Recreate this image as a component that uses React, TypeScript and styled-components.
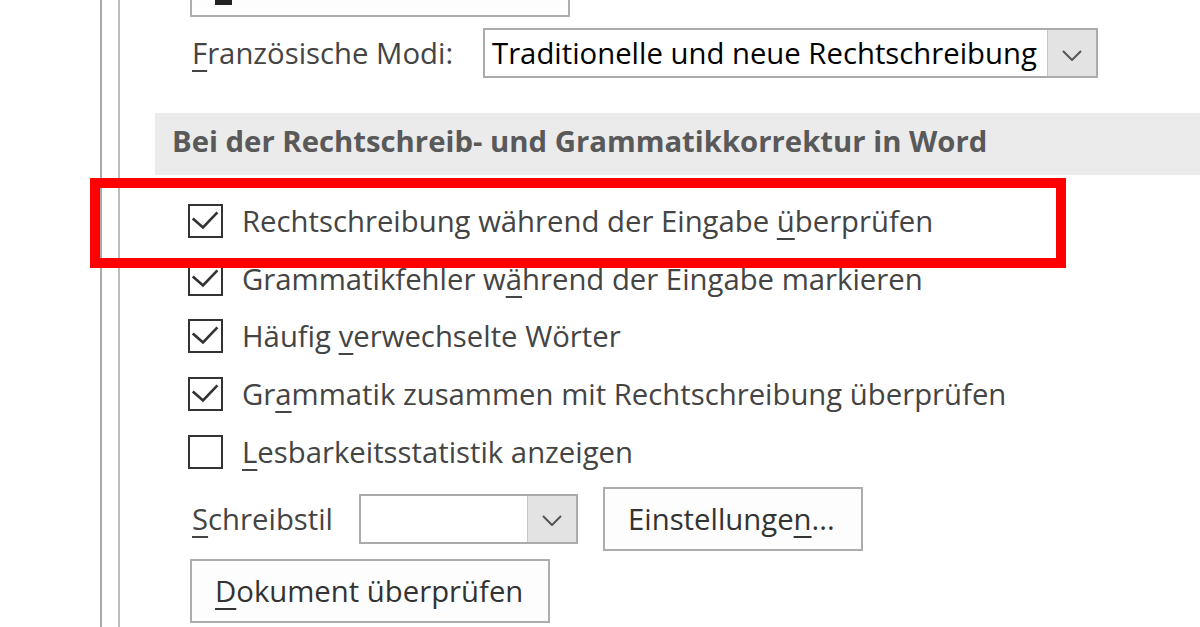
import React from "react";
import styled, { createGlobalStyle } from "styled-components";

const GlobalStyle = createGlobalStyle`
  html, body { margin: 0; padding: 0; background: #fff; }
  body {
    font-family: "Open Sans", "Noto Sans", sans-serif;
    font-size: 29.3px;
    color: #444;
  }
`;

const Page = styled.div`
  position: relative;
  width: 1200px;
  height: 627px;
  overflow: hidden;
  display: flex;
  background: #fff;
`;

const Gutter = styled.div`
  flex: none;
  width: 100px;
`;

const Rail = styled.div`
  flex: none;
  width: 16px;
  border-left: 2px solid #a9a9a9;
  border-right: 2px solid #bdbdbd;
`;

const Content = styled.div`
  flex: 1;
  min-width: 0;
  display: flex;
  flex-direction: column;
  padding-left: 35px;
`;

const Block = styled.div`
  display: flex;
  flex-direction: column;
  align-items: flex-start;
  padding-left: 35px;
`;

const Button = styled.div<{ $w: number; $mt?: number; $ml?: number }>`
  box-sizing: border-box;
  flex: none;
  width: ${(p) => p.$w}px;
  height: 64px;
  margin-top: ${(p) => p.$mt ?? 0}px;
  margin-left: ${(p) => p.$ml ?? 0}px;
  border: 2px solid #adadad;
  background: #fdfdfd;
  display: flex;
  align-items: center;
  padding: 0 0 0 23px;
  color: #333;
  white-space: nowrap;
`;

/* Button scrolled mostly out of view: only the bottom of its access-key underline shows */
const ClippedButton = styled(Button)`
  align-items: flex-end;
  padding-bottom: 10px;
`;

const AccessMark = styled.span`
  display: block;
  width: 17px;
  height: 5px;
  background: #222;
`;

const Key = styled.span`
  text-decoration: underline;
  text-underline-offset: 6px;
  text-decoration-thickness: 2px;
`;

const FieldRow = styled.div<{ $h: number; $mt: number }>`
  display: flex;
  align-items: center;
  height: ${(p) => p.$h}px;
  margin-top: ${(p) => p.$mt}px;
`;

const Label = styled.div<{ $w: number }>`
  box-sizing: border-box;
  flex: none;
  width: ${(p) => p.$w}px;
  padding: 0 0 0 2px;
  white-space: nowrap;
  color: #444;
`;

const Select = styled.div<{ $w: number }>`
  box-sizing: border-box;
  flex: none;
  width: ${(p) => p.$w}px;
  height: 50px;
  border: 2px solid #ababab;
  background: #fff;
  display: flex;
`;

const SelectValue = styled.div`
  flex: 1;
  min-width: 0;
  display: flex;
  align-items: center;
  padding: 0 0 0 7px;
  color: #000;
  white-space: nowrap;
  overflow: hidden;
`;

const SelectArrow = styled.div`
  flex: none;
  width: 49px;
  background: #e3e3e3;
  border-left: 1px solid #c6c6c6;
  display: flex;
  align-items: center;
  justify-content: center;
  padding-top: 4px;
  box-sizing: border-box;
`;

const SectionHeader = styled.div`
  box-sizing: border-box;
  margin-top: 35px;
  height: 62px;
  background: #ebebeb;
  display: flex;
  align-items: center;
  padding: 0 0 6px 17px;
  font-weight: 700;
  color: #595959;
  white-space: nowrap;
`;

const CheckList = styled.div`
  display: flex;
  flex-direction: column;
  margin-top: 17px;
`;

const CheckRow = styled.div`
  display: flex;
  align-items: center;
  height: 57.75px;
  margin-left: -2px;
`;

const Box = styled.div`
  box-sizing: border-box;
  flex: none;
  width: 35px;
  height: 34px;
  border: 2px solid #333;
  background: #fff;
  margin-right: 19px;
  display: flex;
`;

const CheckText = styled.span`
  white-space: nowrap;
  color: #444;
`;

const Highlight = styled.div`
  position: absolute;
  left: 90px;
  top: 178px;
  width: 976px;
  height: 90px;
  box-sizing: border-box;
  border: 10px solid #ff0000;
  pointer-events: none;
`;

const Chevron = () => (
  <svg width="20" height="11" viewBox="0 0 20 11" fill="none">
    <path d="M1 1 L10 10 L19 1" stroke="#555" strokeWidth="2" />
  </svg>
);

const Check = () => (
  <svg width="31" height="30" viewBox="0 0 31 30" fill="none">
    <path
      d="M3.7 13.3 L13 21.5 L26.5 7.3"
      stroke="#333"
      strokeWidth="2.6"
      strokeLinecap="square"
    />
  </svg>
);

type Item = { checked: boolean; label: React.ReactNode };

const items: Item[] = [
  {
    checked: true,
    label: (
      <>
        Rechtschreibung während der Eingabe <Key>ü</Key>berprüfen
      </>
    ),
  },
  {
    checked: true,
    label: (
      <>
        Grammatikfehler w<Key>ä</Key>hrend der Eingabe markieren
      </>
    ),
  },
  {
    checked: true,
    label: (
      <>
        Häufig <Key>v</Key>erwechselte Wörter
      </>
    ),
  },
  {
    checked: true,
    label: (
      <>
        Gr<Key>a</Key>mmatik zusammen mit Rechtschreibung überprüfen
      </>
    ),
  },
  {
    checked: false,
    label: (
      <>
        <Key>L</Key>esbarkeitsstatistik anzeigen
      </>
    ),
  },
];

export default function App() {
  return (
    <>
      <GlobalStyle />
      <Page>
        <Gutter />
        <Rail />
        <Content>
          <Block>
            <ClippedButton $w={380} $mt={-47}>
              <AccessMark />
            </ClippedButton>
            <FieldRow $h={50} $mt={11}>
              <Label $w={293}>
                <Key>F</Key>ranzösische Modi:
              </Label>
              <Select $w={615}>
                <SelectValue>Traditionelle und neue Rechtschreibung</SelectValue>
                <SelectArrow>
                  <Chevron />
                </SelectArrow>
              </Select>
            </FieldRow>
          </Block>
          <SectionHeader>
            Bei der Rechtschreib- und Grammatikkorrektur in Word
          </SectionHeader>
          <Block>
            <CheckList>
              {items.map((it, i) => (
                <CheckRow key={i}>
                  <Box>{it.checked && <Check />}</Box>
                  <CheckText>{it.label}</CheckText>
                </CheckRow>
              ))}
            </CheckList>
            <FieldRow $h={64} $mt={6}>
              <Label $w={169}>
                <Key>S</Key>chreibstil
              </Label>
              <Select $w={219}>
                <SelectValue />
                <SelectArrow>
                  <Chevron />
                </SelectArrow>
              </Select>
              <Button $w={260} $ml={25}>
                Einstellunge<Key>n</Key>...
              </Button>
            </FieldRow>
            <Button $w={360} $mt={8}>
              <Key>D</Key>okument überprüfen
            </Button>
          </Block>
        </Content>
        <Highlight />
      </Page>
    </>
  );
}
